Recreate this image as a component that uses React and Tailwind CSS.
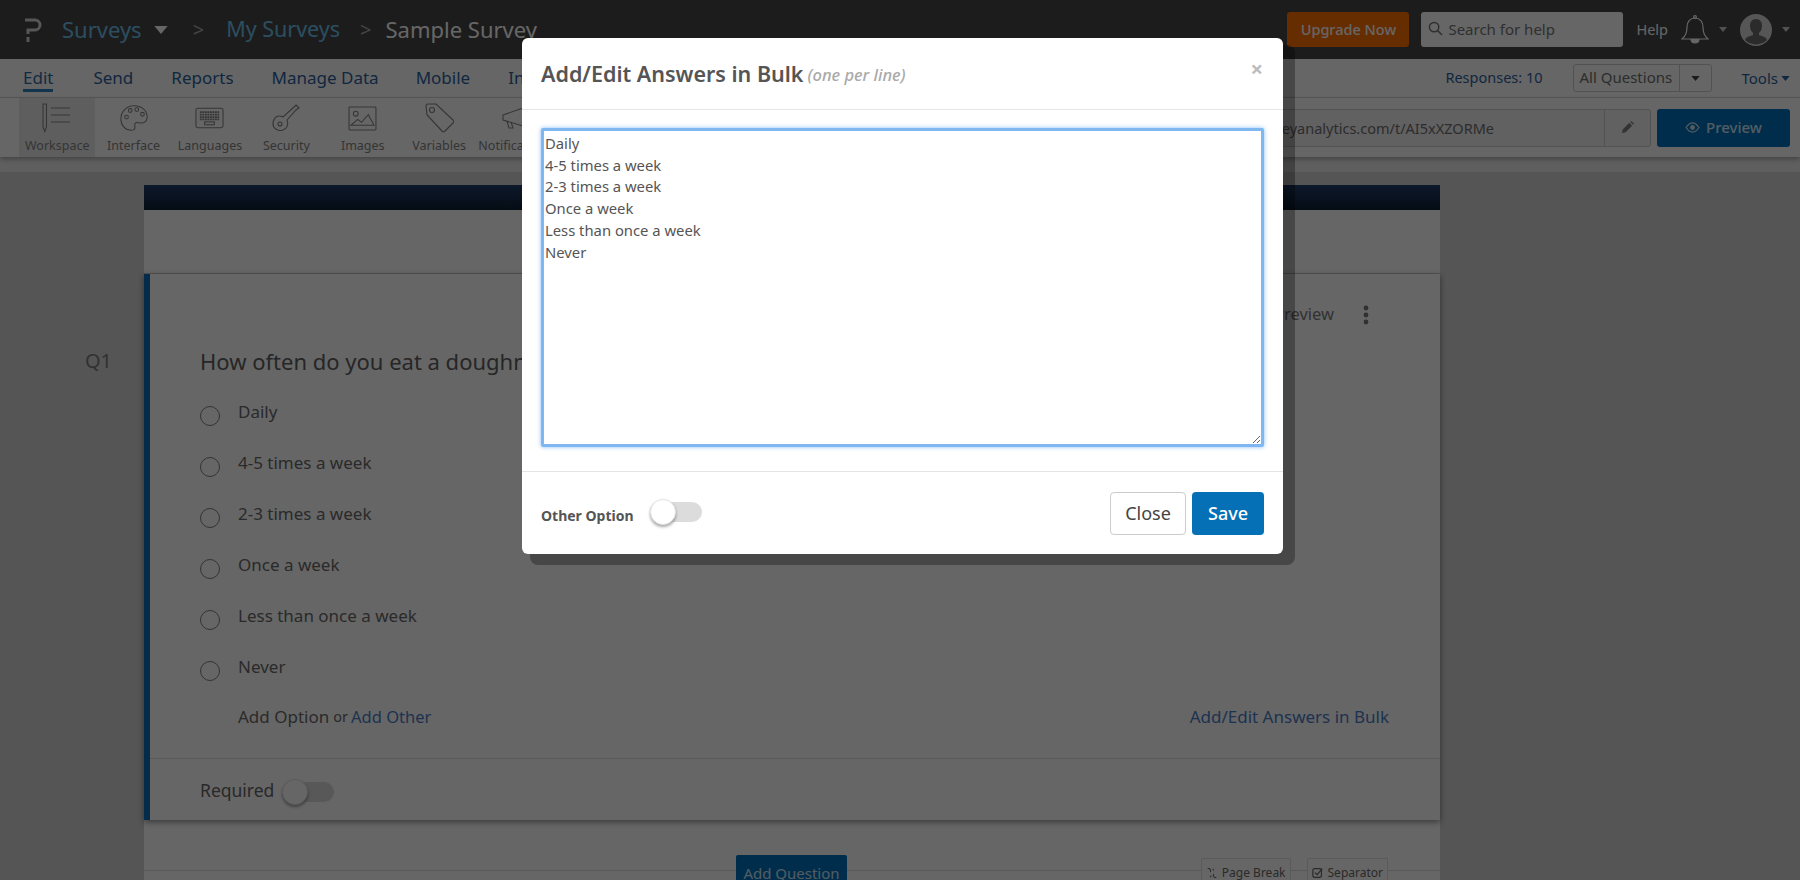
import React from "react";

const Caret = ({ className }) => (
  <svg viewBox="0 0 10 6" className={className}><path d="M0 0h10L5 6z" fill="currentColor" /></svg>
);

// toolbar icons, thin grey outlines
const toolIcons = {
  Workspace: (
    <svg viewBox="0 0 32 30" className="h-[30px] w-[32px]" fill="none" stroke="currentColor" strokeWidth="1.1">
      <path d="M2 1h3.5v23l-1.7 4.5L2 24z" />
      <path d="M10 5h19M10 12h19M10 19h19" />
    </svg>
  ),
  Interface: (
    <svg viewBox="0 0 32 32" className="h-[30px] w-[30px]" fill="none" stroke="currentColor" strokeWidth="1.1">
      <path d="M16 3C8 3 2 9 2 17c0 7 5 12 11 12 3 0 4-1 4-3 0-3-1-4 1-5 2-1 5 1 8 0 3-1 4-3 4-6 0-7-6-12-14-12z" />
      <circle cx="8" cy="15" r="2" /><circle cx="12" cy="8" r="2" /><circle cx="19" cy="7" r="2" /><circle cx="25" cy="12" r="2" />
    </svg>
  ),
  Languages: (
    <svg viewBox="0 0 30 22" className="h-[22px] w-[29px]" fill="none" stroke="currentColor" strokeWidth="1.1">
      <rect x="1" y="1" width="28" height="20" rx="2" />
      <path d="M5 5h20M5 7.5h20M5 10h20M5 12.5h20" strokeWidth="1.8" strokeDasharray="2 .6" />
      <rect x="10" y="15" width="10" height="3" />
    </svg>
  ),
  Security: (
    <svg viewBox="0 0 30 30" className="h-[30px] w-[30px]" fill="none" stroke="currentColor" strokeWidth="1.1">
      <path d="M25 2l3 3-3 2-9 10c2 4 0 9-4 10-5 2-10-2-10-6 0-5 3-8 6-8 2 0 3 0 4 1l11-10z" />
      <circle cx="9" cy="21" r="2" />
    </svg>
  ),
  Images: (
    <svg viewBox="0 0 30 26" className="h-[25px] w-[29px]" fill="none" stroke="currentColor" strokeWidth="1.1">
      <rect x="1" y="1" width="28" height="24" rx="1" />
      <circle cx="8" cy="8" r="2.5" />
      <path d="M3 20l7-6 4 3 7-8 6 11H3z" />
    </svg>
  ),
  Variables: (
    <svg viewBox="0 0 30 30" className="h-[30px] w-[30px]" fill="none" stroke="currentColor" strokeWidth="1.1">
      <path d="M2 3c0-1 1-2 2-2h8l17 16c1 1 1 2 0 3l-8 8c-1 1-2 1-3 0L3 12z" />
      <circle cx="8" cy="7" r="2.5" />
    </svg>
  ),
  Notifications: (
    <svg viewBox="0 0 30 24" className="h-[24px] w-[30px]" fill="none" stroke="currentColor" strokeWidth="1.1">
      <path d="M2 9l20-7v18L2 14z" /><path d="M6 15l2 7h4l-2-6" />
    </svg>
  ),
};

const tools = ["Workspace", "Interface", "Languages", "Security", "Images", "Variables", "Notifications"];
const answers = ["Daily", "4-5 times a week", "2-3 times a week", "Once a week", "Less than once a week", "Never"];

function Toggle() {
  return (
    <span className="relative block h-[20px] w-[52px] rounded-full bg-[#dcdcdc]">
      <span className="absolute -top-[3px] left-0 block h-[26px] w-[26px] rounded-full border border-[#e4e4e4] bg-white shadow-[0_2px_3px_rgba(0,0,0,0.35)]" />
    </span>
  );
}

export default function App() {
  return (
    <div className="relative h-[880px] w-full overflow-hidden bg-[#d9d9d9] font-['Noto_Sans',sans-serif]">
      {/* top bar */}
      <header className="flex h-[59px] items-center bg-[#474747] pl-[25px] pr-[10px]">
        <svg viewBox="0 0 17 24" className="h-[24px] w-[17px] text-[#d8d8d8]" fill="none" stroke="currentColor" strokeWidth="3">
          <path d="M0 2h10a5 5 0 0 1 0 10H3v4" /><path d="M3 19v5" />
        </svg>
        <span className="ml-[20px] text-[22px] text-[#6fc3ee]">Surveys</span>
        <Caret className="ml-[12px] h-[8px] w-[14px] text-white" />
        <span className="ml-[25px] text-[20px] text-[#aaaaaa]">&gt;</span>
        <span className="ml-[22px] text-[21.5px] text-[#6fc3ee]">My Surveys</span>
        <span className="ml-[20px] text-[20px] text-[#aaaaaa]">&gt;</span>
        <span className="ml-[14px] whitespace-nowrap text-[22px] text-white">Sample Survey</span>
        <button className="ml-auto h-[35px] w-[122px] rounded-[3px] bg-[#ff7000] text-[14.5px] font-medium text-white">Upgrade Now</button>
        <div className="ml-[12px] flex h-[35px] w-[202px] items-center gap-[5px] rounded-[3px] bg-white pl-[7px] text-[#777777]">
          <svg viewBox="0 0 16 16" className="mb-[3px] h-[15px] w-[15px]" fill="none" stroke="currentColor" strokeWidth="1.6">
            <circle cx="6.5" cy="6.5" r="5" /><path d="M10 10l5 5" />
          </svg>
          <span className="text-[15px]">Search for help</span>
        </div>
        <span className="ml-[13px] text-[14.5px] text-white">Help</span>
        <svg viewBox="0 0 28 30" className="ml-[13px] h-[30px] w-[28px] text-white" fill="none" stroke="currentColor" strokeWidth="1.2">
          <path d="M14 3c-5 0-8 4-8 9 0 6-1 9-5 12h26c-4-3-5-6-5-12 0-5-3-9-8-9z" />
          <circle cx="14" cy="2" r="1.4" />
          <path d="M10 24c0 3 2 4 4 4s4-1 4-4" fill="currentColor" />
        </svg>
        <Caret className="ml-[10px] h-[5px] w-[8px] text-[#cccccc]" />
        <svg viewBox="0 0 32 32" className="ml-[13px] h-[32px] w-[32px]">
          <circle cx="16" cy="16" r="16" fill="#d6d6d6" />
          <path d="M16 5c-4 0-6 3-6 7 0 3 1 5 3 7v2c-3 1-7 2-8 5a16 16 0 0 0 22 0c-1-3-5-4-8-5v-2c2-2 3-4 3-7 0-4-2-7-6-7z" fill="#6b6b6b" />
        </svg>
        <Caret className="ml-[10px] h-[5px] w-[8px] text-[#cccccc]" />
      </header>

      {/* tabs */}
      <nav className="flex h-[39px] items-center border-b border-[#dddddd] bg-white pl-[23px] pr-[10px] text-[17px] text-[#2d5f9e]">
        <span className="relative text-[#2d6da8]">
          Edit
          <span className="absolute -bottom-[1px] left-0 h-[3px] w-full bg-[#2f86c0]" />
        </span>
        <span className="ml-[40px]">Send</span>
        <span className="ml-[38px]">Reports</span>
        <span className="ml-[38px]">Manage Data</span>
        <span className="ml-[37px]">Mobile</span>
        <span className="ml-[38px]">Integrations</span>
        <span className="ml-auto text-[14.5px]">Responses: 10</span>
        <div className="ml-[30px] flex h-[28px] w-[139px] rounded-[3px] border border-[#cccccc] text-[15px] text-[#707070]">
          <span className="flex-1 pl-[6px] leading-[24px]">All Questions</span>
          <span className="flex w-[32px] items-center justify-center border-l border-[#cccccc]">
            <Caret className="h-[5px] w-[9px] text-[#444444]" />
          </span>
        </div>
        <span className="ml-[30px] text-[15px]">Tools</span>
        <Caret className="ml-[3px] h-[5px] w-[9px] text-[#2d5f9e]" />
      </nav>

      {/* tool row */}
      <div className="relative z-10 flex h-[59px] items-center bg-white pl-[19px] pr-[10px] shadow-[0_2px_5px_rgba(0,0,0,0.3)]">
        {tools.map((t) => (
          <div key={t} className={`flex h-full w-[76.4px] flex-col items-center text-[#858585] ${t === "Workspace" ? "bg-[#ececec]" : ""}`}>
            <div className="flex h-[38px] items-center pt-[2px]">{toolIcons[t]}</div>
            <span className="whitespace-nowrap text-[12.5px] leading-[20px]">{t}</span>
          </div>
        ))}
        <div className="ml-auto flex h-[38px] w-[700px] rounded-[3px] border border-[#cccccc] bg-[#f2f2f2]">
          <span className="flex flex-1 items-center justify-end pr-[110px] pt-[2px] text-[14.5px] text-[#707070]">www.surveyanalytics.com/t/AI5xXZORMe</span>
          <span className="flex w-[46px] items-center justify-center border-l border-[#cccccc] text-[#808080]">
            <svg viewBox="0 0 14 14" className="h-[13px] w-[13px]"><path d="M1 13l1-4 7-7 3 3-7 7zM10 1l1-1 3 3-1 1z" fill="currentColor" /></svg>
          </span>
        </div>
        <button className="ml-[6px] flex h-[38px] w-[133px] items-center justify-center gap-[6px] rounded-[3px] bg-[#0272bb] text-[15px] font-medium text-[#cfe6f5]">
          <svg viewBox="0 0 16 12" className="h-[11px] w-[15px]" fill="none" stroke="currentColor" strokeWidth="1.4">
            <path d="M1 6c2-3 4-5 7-5s5 2 7 5c-2 3-4 5-7 5S3 9 1 6z" /><circle cx="8" cy="6" r="2" fill="currentColor" />
          </svg>
          Preview
        </button>
      </div>

      <div className="h-[15px] bg-[#ededed]" />

      {/* canvas */}
      <main className="h-[708px] bg-[#d4d4d4] pl-[144px] pr-[360px] pt-[13px]">
        <div className="h-[25px] bg-gradient-to-b from-[#1f3f6e] to-[#0f1f33]" />
        <div className="h-[64px] border-b border-[#cfcfcf] bg-white" />
        <section className="relative z-[1] h-[546px] border-l-[6px] border-[#0b6fb8] bg-white shadow-[0_2px_6px_rgba(0,0,0,0.45)]">
          <div className="flex h-[484px] flex-col pl-[50px] pr-[51px]">
            <div className="flex h-[60px] items-center justify-end gap-[29px] pr-[20px] pt-[21px]">
              <span className="text-[16.5px] text-[#7d7d7d]">Preview</span>
              <svg viewBox="0 0 6 20" className="h-[20px] w-[6px] text-[#7a7a7a]"><circle cx="3" cy="3" r="2.4" fill="currentColor" /><circle cx="3" cy="10" r="2.4" fill="currentColor" /><circle cx="3" cy="17" r="2.4" fill="currentColor" /></svg>
            </div>
            <div className="flex h-[56px] items-start">
              <span className="ml-[-115px] w-[115px] text-[20px] leading-[54px] text-[#7a7a7a]">Q1</span>
              <span className="text-[22px] leading-[54px] text-[#5f5f5f]">How often do you eat a doughnut?</span>
            </div>
            {answers.map((a) => (
              <div key={a} className="flex h-[51px] items-start">
                <span className="mt-[16px] block h-[20px] w-[20px] rounded-full border-[1.5px] border-[#808080]" />
                <span className="ml-[18px] text-[17px] leading-[44px] text-[#6a6a6a]">{a}</span>
              </div>
            ))}
            <div className="flex h-[42px] items-center text-[17px] text-[#6a6a6a]">
              <span className="ml-[38px]">Add Option</span>
              <span className="ml-[4px] text-[14.5px]">or</span>
              <span className="ml-[3px] text-[16.5px] text-[#4a7ec8]">Add Other</span>
              <span className="ml-auto text-[#4a7ec8]">Add/Edit Answers in Bulk</span>
            </div>
          </div>
          <div className="flex h-[62px] items-center gap-[8px] border-t border-[#dcdcdc] pl-[50px] pt-[2px] text-[17.5px] text-[#666666]">
            Required
            <span className="mt-[3px]"><Toggle /></span>
          </div>
        </section>
        {/* add question strip */}
        <div className="h-[60px] bg-white">
          <div className="flex h-[51px] items-start border-b border-[#dcdcdc]">
            <button className="ml-[592px] mt-[35px] h-[25px] w-[111px] rounded-t-[2px] bg-[#0272bb] pt-[10px] text-[15px] leading-[14px] text-[#cfe6f5]">Add Question</button>
            <span className="ml-auto mt-[38px] flex h-[22px] items-center gap-[4px] rounded-t-[2px] border border-b-0 border-[#e0e0e0] bg-white px-[4px] pt-[6px] text-[12px] leading-[16px] text-[#6a6a6a]">
              <svg viewBox="0 0 14 14" className="h-[12px] w-[12px]" fill="none" stroke="currentColor" strokeWidth="1.2"><path d="M2 2c3-1 4 2 3 4M12 12c-3 1-4-2-3-4M8 2l1 2M5 12l1-2" /></svg>
              Page Break
            </span>
            <span className="ml-[16px] mr-[52px] mt-[38px] flex h-[22px] items-center gap-[4px] rounded-t-[2px] border border-b-0 border-[#e0e0e0] bg-white px-[4px] pt-[6px] text-[12px] leading-[16px] text-[#6a6a6a]">
              <svg viewBox="0 0 14 14" className="h-[12px] w-[12px]" fill="none" stroke="currentColor" strokeWidth="1.4"><rect x="1" y="2" width="10" height="10" rx="2" /><path d="M3.5 6.5l2.5 2.5 6-7" /></svg>
              Separator
            </span>
          </div>
        </div>
      </main>

      {/* backdrop */}
      <div className="absolute inset-0 z-20 bg-black/60" />

      {/* bulk edit dialog */}
      <div className="absolute left-[522px] top-[38px] z-30 h-[516px] w-[761px] rounded-[6px] bg-white shadow-[10px_9px_0_2px_rgba(0,0,0,0.3)]">
        <div className="flex h-[72px] items-center border-b border-[#e5e5e5] pl-[19px] pr-[20px]">
          <span className="pt-[2px] text-[21.5px] font-semibold text-[#555555]">Add/Edit Answers in Bulk</span>
          <span className="ml-[4px] mt-[4px] text-[16.5px] font-medium italic text-[#aaaaaa]">(one per line)</span>
          <span className="mb-[11px] ml-auto text-[22px] font-bold leading-none text-[#bdbdbd]">×</span>
        </div>
        <div className="h-[361px] px-[19px] pt-[18px]">
          <textarea
            readOnly
            value={answers.join("\n")}
            className="block h-[319px] w-full resize-y rounded-[2px] border-[3px] border-[#7fb8f0] bg-white px-[1px] py-[2px] text-[14.8px] leading-[21.7px] text-[#555555] shadow-[0_0_4px_rgba(110,175,245,0.8)] outline-none"
          />
        </div>
        <div className="flex h-[83px] items-center border-t border-[#e5e5e5] pl-[19px] pr-[19px]">
          <span className="pt-[4px] text-[14px] font-bold text-[#555555]">Other Option</span>
          <span className="ml-[16px] -mt-[2px]"><Toggle /></span>
          <button className="ml-auto h-[43px] w-[76px] rounded-[4px] border border-[#cccccc] bg-white text-[18px] text-[#444444]">Close</button>
          <button className="ml-[6px] h-[43px] w-[72px] rounded-[4px] bg-[#0570b5] text-[18px] font-medium text-white">Save</button>
        </div>
      </div>
    </div>
  );
}
